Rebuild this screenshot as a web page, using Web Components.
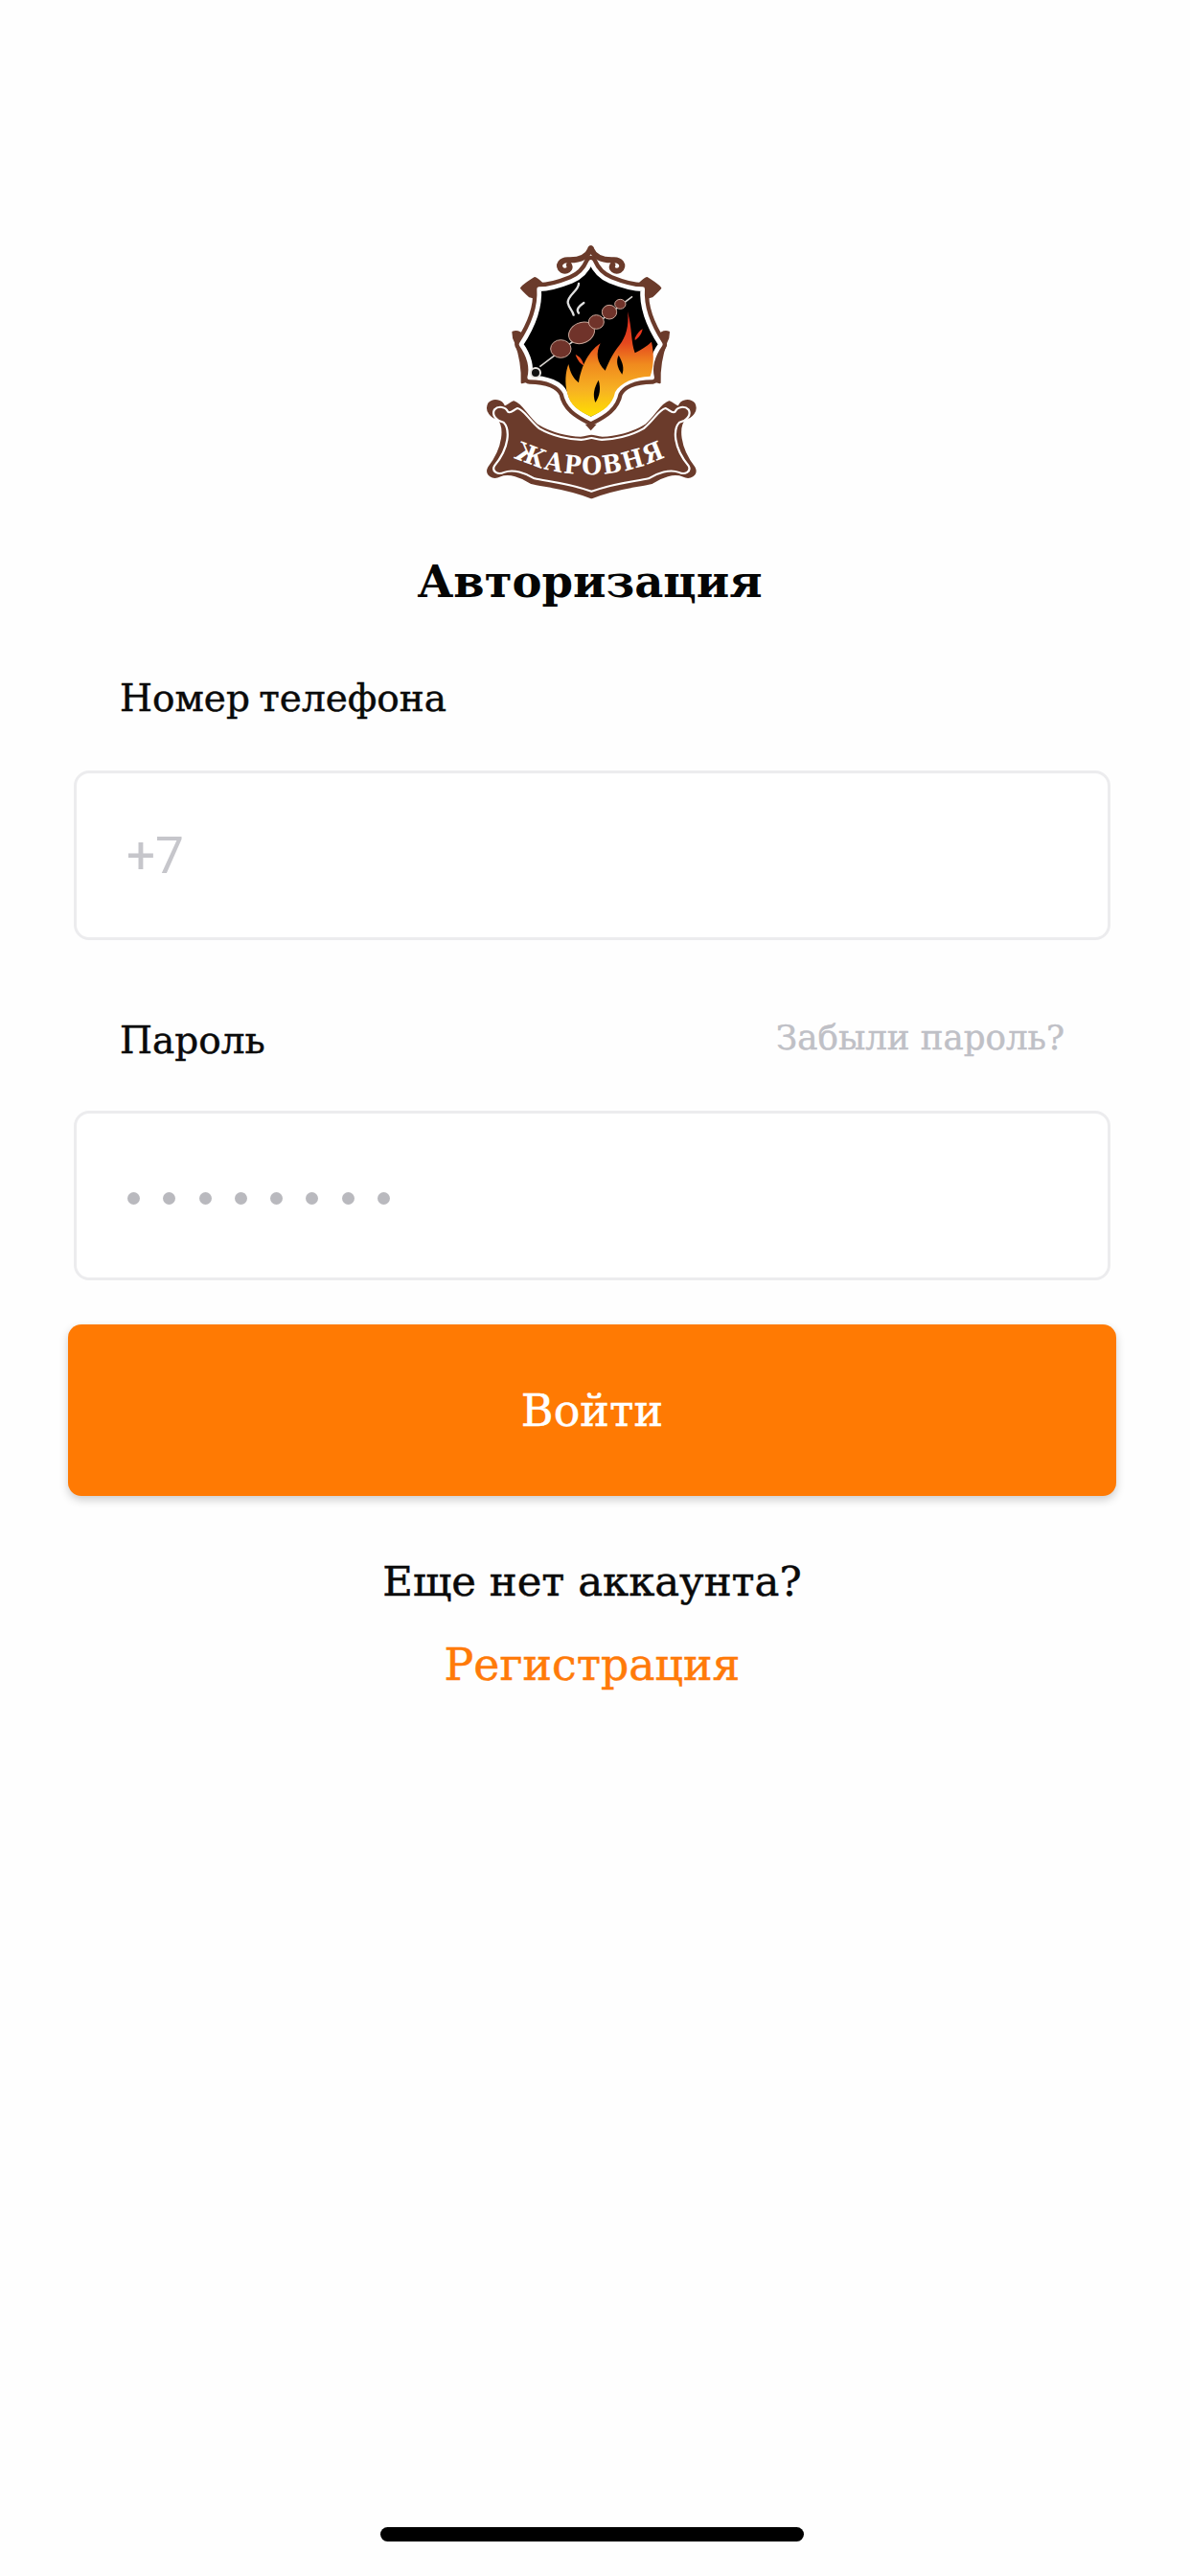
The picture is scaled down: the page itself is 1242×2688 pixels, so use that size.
<!DOCTYPE html>
<html lang="ru">
<head>
<meta charset="utf-8">
<title>Авторизация</title>
<style>
    html, body {
        margin: 0;
        padding: 0;
        background-color: #fefefe;
    }
    body {
        font-family: "DejaVu Serif", serif;
        color: #0a0a0a;
    }
</style>
</head>
<body>
<login-screen>
    <brand-logo></brand-logo>
    <h-title>Авторизация</h-title>
    <form-field label="Номер телефона" top="68" gap="53">
        <span style="font: 400 53px Roboto, sans-serif; color: #c6c6cb; margin-left: -1px;">+7</span>
    </form-field>
    <form-field label="Пароль" hint="Забыли пароль?" top="81" gap="51">
        <password-dots count="8"></password-dots>
    </form-field>
    <primary-button>Войти</primary-button>
    <auth-footer question="Еще нет аккаунта?" link="Регистрация"></auth-footer>
    <home-indicator></home-indicator>
</login-screen>

<script>
class LoginScreen extends HTMLElement {
    constructor() {
        super();
        this.shadowDOM = this.attachShadow({ mode: "open" });
    }

    connectedCallback() {
        this.shadowDOM.innerHTML = `
            <style>
                :host {
                    display: flex;
                    flex-direction: column;
                    box-sizing: border-box;
                    width: 1242px;
                    height: 2688px;
                    padding: 240px 77px 36px 71px;
                }
            </style>
            <slot></slot>
        `;
    }
}

class BrandLogo extends HTMLElement {
    constructor() {
        super();
        this.shadowDOM = this.attachShadow({ mode: "open" });
    }

    connectedCallback() {
        const shield = "M410 100C422 128 445 150 470 160C500 172 540 185 572 185C568 240 590 300 628 358C604 392 594 430 602 462C545 462 504 480 490 510C482 552 450 572 410 592C370 572 338 552 330 510C316 480 275 462 218 462C226 430 216 392 192 358C230 300 252 240 248 185C280 185 320 172 350 160C375 150 398 128 410 100Z";
        const banner = "M92 545C105 530 130 535 136 552C145 562 155 545 168 540C190 545 205 580 240 612C285 640 340 652 378 652C395 652 402 646 412 646C422 646 429 652 446 652C484 652 539 640 584 612C619 580 634 545 656 540C669 545 679 562 688 552C694 535 719 530 732 545C742 565 725 585 702 590C680 615 682 680 732 745C742 765 720 778 700 768C670 755 630 770 600 790C560 800 490 805 412 836C334 805 264 800 224 790C194 770 154 755 124 768C104 778 82 765 92 745C142 680 144 615 122 590C99 585 82 565 92 545Z";
        this.shadowDOM.innerHTML = `
            <style>
                :host {
                    display: block;
                    align-self: center;
                    width: 280px;
                    height: 300px;
                    margin-left: 4px;
                }
                svg {
                    display: block;
                }
                text {
                    font-family: "DejaVu Serif Condensed", "DejaVu Serif", serif;
                    font-weight: 700;
                    font-size: 80px;
                    letter-spacing: 5px;
                    fill: #fff;
                }
            </style>
            <svg width="280" height="300" viewBox="0 0 840 900">
                <defs>
                    <linearGradient id="flame" x1="0" y1="0" x2="0" y2="1">
                        <stop offset="0" stop-color="#d8261c"/>
                        <stop offset="0.3" stop-color="#e5481e"/>
                        <stop offset="0.5" stop-color="#f08a1e"/>
                        <stop offset="0.75" stop-color="#f7b222"/>
                        <stop offset="1" stop-color="#ffe000"/>
                    </linearGradient>
                </defs>

                <!-- ornaments of the shield -->
                <g fill="none" stroke="#6b3b2b" stroke-width="18" stroke-linecap="round" stroke-linejoin="round">
                    <path d="M410 58C400 82 380 94 345 94C316 90 302 112 320 126C335 132 348 122 342 110"/>
                    <path d="M410 58C420 82 440 94 475 94C504 90 518 112 500 126C485 132 472 122 478 110"/>
                </g>
                <g fill="#6b3b2b" stroke="#6b3b2b" stroke-width="6" stroke-linejoin="round">
                    <path d="M560 170C570 160 580 152 586 150C600 160 616 168 628 182C620 192 610 200 602 208L575 215Z"/>
                    <path d="M260 170C250 160 240 152 234 150C220 160 204 168 192 182C200 192 210 200 218 208L245 215Z"/>
                    <path d="M622 330C632 318 645 315 654 320C654 330 650 345 646 352C634 385 624 430 626 478L604 472L614 350Z"/>
                    <path d="M198 330C188 318 175 315 166 320C166 330 170 345 174 352C186 385 196 430 194 478L216 472L206 350Z"/>
                </g>
                <path d="${shield}" fill="#6b3b2b" stroke="#6b3b2b" stroke-width="40" stroke-linejoin="round"/>
                <path d="${shield}" fill="#000" stroke="#fff" stroke-width="14" stroke-linejoin="round"/>
                <path d="M410 628L392 608H428Z" fill="#6b3b2b"/>

                <!-- smoke -->
                <g fill="none" stroke="#e0e0e0" stroke-width="7" stroke-linecap="round">
                    <path d="M372 168C372 190 336 205 338 228C342 246 352 250 356 266"/>
                    <path d="M388 228C374 238 362 248 372 260"/>
                </g>

                <!-- flames -->
                <path fill="url(#flame)" d="M340 420C345 445 355 465 372 478C378 440 395 385 440 355C425 385 428 415 455 440C470 405 480 385 500 360C520 335 530 300 525 255C540 310 535 350 548 385C565 375 585 365 600 350C610 395 605 435 596 458C545 460 502 478 486 508C478 548 448 568 410 584C372 568 344 548 336 510C328 480 330 445 340 420Z"/>
                <path fill="#f0501e" d="M362 390C374 396 384 405 388 424C378 420 368 408 362 390Z"/>
                <path fill="#e8351c" d="M548 338C555 325 562 315 572 310C570 325 560 338 548 345Z"/>
                <path fill="#000" d="M497 392C488 410 492 430 508 452C515 432 510 415 497 392Z"/>
                <path fill="#000" d="M434 470C420 495 415 515 424 540C438 520 442 495 434 470Z"/>

                <!-- skewer -->
                <path d="M250 428L540 208" stroke="#d8d4d0" stroke-width="5" fill="none"/>
                <circle cx="237" cy="447" r="15" fill="#111" stroke="#e8e4e0" stroke-width="6"/>
                <g fill="#70332a" stroke="#c9a79a" stroke-width="3">
                    <ellipse cx="316" cy="372" rx="32" ry="28"/>
                    <ellipse cx="381" cy="322" rx="42" ry="32" transform="rotate(-25 381 322)"/>
                    <ellipse cx="427" cy="288" rx="24" ry="22"/>
                    <ellipse cx="468" cy="257" rx="23" ry="22"/>
                    <ellipse cx="502" cy="232" rx="17" ry="15"/>
                </g>

                <!-- ribbon -->
                <path d="${banner}" fill="#6b3b2b" stroke="#6b3b2b" stroke-width="10" stroke-linejoin="round"/>
                <path d="${banner}" fill="none" stroke="#fff" stroke-width="7" stroke-linejoin="round" transform="translate(412 690) scale(0.95 0.88) translate(-412 -690)"/>
                <path id="ribbon-line" d="M168 712Q410 825 662 702L740 664" fill="none"/>
                <text><textPath href="#ribbon-line">ЖАРОВНЯ</textPath></text>
            </svg>
        `;
    }
}

class HTitle extends HTMLElement {
    constructor() {
        super();
        this.shadowDOM = this.attachShadow({ mode: "open" });
    }

    connectedCallback() {
        this.shadowDOM.innerHTML = `
            <style>
                :host {
                    display: block;
                    margin-top: 37px;
                    height: 60px;
                    line-height: 60px;
                    margin-left: -5px;
                    text-align: center;
                    font-size: 46.5px;
                    font-weight: 700;
                    color: #050505;
                }
            </style>
            <slot></slot>
        `;
    }
}

class FormField extends HTMLElement {
    constructor() {
        super();
        this.shadowDOM = this.attachShadow({ mode: "open" });
    }

    connectedCallback() {
        const hint = this.getAttribute("hint");
        this.shadowDOM.innerHTML = `
            <style>
                :host {
                    display: block;
                    margin-top: ${this.getAttribute("top")}px;
                    padding: 0 6px;
                }
                .head {
                    display: flex;
                    justify-content: space-between;
                    align-items: center;
                    height: 46px;
                    padding: 0 48px;
                    margin-bottom: ${this.getAttribute("gap")}px;
                }
                .label {
                    font-size: 39px;
                    word-spacing: -3px;
                    -webkit-text-stroke: 0.5px #0a0a0a;
                }
                .hint {
                    font-size: 35.6px;
                    color: #bfc0c6;
                    -webkit-text-stroke: 0.5px #bfc0c6;
                    position: relative;
                    top: -3px;
                }
                .box {
                    display: flex;
                    align-items: center;
                    box-sizing: border-box;
                    height: 177px;
                    padding: 0 53px;
                    border: 3px solid #ececee;
                    border-radius: 16px;
                    background-color: #fff;
                }
            </style>
            <div class="head">
                <span class="label">${this.getAttribute("label")}</span>
                ${hint ? `<span class="hint">${hint}</span>` : ""}
            </div>
            <div class="box"><slot></slot></div>
        `;
    }
}

class PasswordDots extends HTMLElement {
    constructor() {
        super();
        this.shadowDOM = this.attachShadow({ mode: "open" });
    }

    connectedCallback() {
        const count = Number(this.getAttribute("count"));
        this.shadowDOM.innerHTML = `
            <style>
                :host {
                    display: flex;
                    gap: 24.3px;
                    margin-top: 6px;
                }
                i {
                    width: 13px;
                    height: 13px;
                    border-radius: 50%;
                    background-color: #b9b9be;
                }
            </style>
            ${"<i></i>".repeat(count)}
        `;
    }
}

class PrimaryButton extends HTMLElement {
    constructor() {
        super();
        this.shadowDOM = this.attachShadow({ mode: "open" });
    }

    connectedCallback() {
        this.shadowDOM.innerHTML = `
            <style>
                :host {
                    display: flex;
                    justify-content: center;
                    align-items: center;
                    height: 179px;
                    margin-top: 46px;
                    border-radius: 14px;
                    background-color: #ff7a03;
                    box-shadow: 0 4px 10px rgba(0, 0, 0, 0.2);
                    color: #fff;
                    font-size: 46px;
                    -webkit-text-stroke: 0.5px #fff;
                }
            </style>
            <slot></slot>
        `;
    }
}

class AuthFooter extends HTMLElement {
    constructor() {
        super();
        this.shadowDOM = this.attachShadow({ mode: "open" });
    }

    connectedCallback() {
        this.shadowDOM.innerHTML = `
            <style>
                :host {
                    display: flex;
                    flex-direction: column;
                    align-items: center;
                    gap: 29px;
                    margin-top: 60px;
                    font-size: 43.4px;
                    line-height: 58px;
                    -webkit-text-stroke: 0.5px #0a0a0a;
                }
                .link {
                    font-size: 45.8px;
                    color: #ff7a09;
                    -webkit-text-stroke: 0.5px #ff7a09;
                }
            </style>
            <span>${this.getAttribute("question")}</span>
            <span class="link">${this.getAttribute("link")}</span>
        `;
    }
}

class HomeIndicator extends HTMLElement {
    constructor() {
        super();
        this.shadowDOM = this.attachShadow({ mode: "open" });
    }

    connectedCallback() {
        this.shadowDOM.innerHTML = `
            <style>
                :host {
                    display: block;
                    align-self: center;
                    width: 442px;
                    height: 15px;
                    margin-top: auto;
                    border-radius: 8px;
                    background-color: #000;
                }
            </style>
        `;
    }
}

customElements.define("login-screen", LoginScreen);
customElements.define("brand-logo", BrandLogo);
customElements.define("h-title", HTitle);
customElements.define("form-field", FormField);
customElements.define("password-dots", PasswordDots);
customElements.define("primary-button", PrimaryButton);
customElements.define("auth-footer", AuthFooter);
customElements.define("home-indicator", HomeIndicator);
</script>
</body>
</html>
